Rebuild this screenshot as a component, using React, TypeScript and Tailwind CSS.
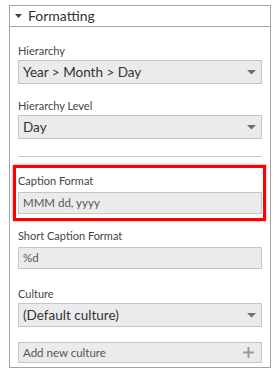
import { ReactNode } from 'react';

const font = { fontFamily: 'Lato, "Open Sans", sans-serif' };

function Label({ children }: { children: ReactNode }) {
  return <div className="text-[11px] leading-[14px] text-[#444]">{children}</div>;
}

function Caret() {
  return (
    <svg width="9" height="5" viewBox="0 0 9 5" className="shrink-0">
      <path d="M0 0 H9 L4.5 4.5 Z" fill="#6f6f6f" />
    </svg>
  );
}

function Combo({ value }: { value: string }) {
  return (
    <div className="h-[24px] flex items-center justify-between pl-[4px] pr-[5px] bg-[#ebebeb] border border-[#c6c6c6] text-[13.5px] text-[#333]">
      <span>{value}</span>
      <Caret />
    </div>
  );
}

function TextBox({ value }: { value: string }) {
  return (
    <div className="h-[22px] flex items-center pl-[4px] bg-[#ebebeb] border border-[#c6c6c6] text-[11.5px] text-[#555]">
      {value}
    </div>
  );
}

export default function App() {
  return (
    <div className="w-[279px] h-[377px] bg-white pt-[5px] pl-[9px]" style={font}>
      <div className="w-[262px] h-[363px] border border-[#a3a3a3] flex flex-col">
        {/* Section header */}
        <div className="h-[21px] border-b border-[#a3a3a3] flex items-center pl-[5px] gap-[6px]">
          <svg width="7" height="4" viewBox="0 0 7 4">
            <path d="M0 0 H7 L3.5 4 Z" fill="#444" />
          </svg>
          <span className="text-[14px] leading-none text-[#333]">Formatting</span>
        </div>

        <div className="px-[8px] pt-[17px] flex flex-col">
          <Label>Hierarchy</Label>
          <div className="mt-[2px]">
            <Combo value="Year > Month > Day" />
          </div>

          <div className="mt-[15px]">
            <Label>Hierarchy Level</Label>
          </div>
          <div className="mt-[2px]">
            <Combo value="Day" />
          </div>

          <div className="mt-[17px] h-px bg-[#c8c8c8]" />

          {/* highlighted field */}
          <div className="mt-[8px] -ml-[5px] -mr-[4px] border-[3px] border-[#ff0000] shadow-[0_0_2px_rgba(255,0,0,0.6)] pl-[2px] pr-[1px] pt-[6px] pb-[4px]">
            <Label>Caption Format</Label>
            <div className="mt-[4px]">
              <TextBox value="MMM dd, yyyy" />
            </div>
          </div>

          <div className="mt-[8px]">
            <Label>Short Caption Format</Label>
          </div>
          <div className="mt-[4px]">
            <TextBox value="%d" />
          </div>

          <div className="mt-[18px]">
            <Label>Culture</Label>
          </div>
          <div className="mt-[2px]">
            <Combo value="(Default culture)" />
          </div>

          <div className="mt-[15px] h-[21px] flex items-center justify-between pl-[4px] pr-[7px] bg-[#ebebeb] border border-[#c6c6c6] text-[11.5px] text-[#555]">
            <span>Add new culture</span>
            <svg width="11" height="11" viewBox="0 0 11 11">
              <path d="M4.5 0 H6.5 V4.5 H11 V6.5 H6.5 V11 H4.5 V6.5 H0 V4.5 H4.5 Z" fill="#9a9a9a" />
            </svg>
          </div>
        </div>
      </div>
    </div>
  );
}
